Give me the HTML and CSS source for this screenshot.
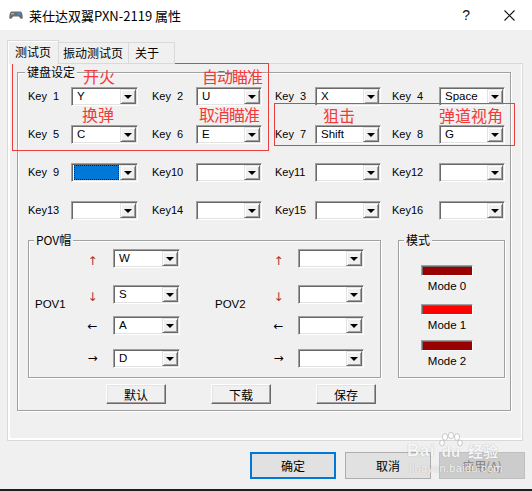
FILE: index.html
```html
<!DOCTYPE html>
<html lang="zh-CN">
<head>
<meta charset="utf-8">
<title>莱仕达双翼PXN-2119 属性</title>
<link rel="stylesheet" href="styles.css">
</head>
<body>
<div class="window">
  <header class="titlebar">
    <svg class="app-icon" width="14" height="10" viewBox="0 0 14 10">
      <path d="M2.5 1.5 H11.5 Q13 1.5 13.5 5 L13.8 8 Q13 9.6 11.2 8.2 L9.8 6.5 H4.2 L2.8 8.2 Q1 9.6 0.2 8 L0.5 5 Q1 1.5 2.5 1.5 Z" fill="#6e6e6e"/>
      <rect x="8.5" y="2.6" width="3" height="2.2" fill="#3a8fe3"/>
      <rect x="2.3" y="3.2" width="2.6" height="1.2" fill="#bdbdbd"/>
    </svg>
    <span class="title">莱仕达双翼PXN-2119 属性</span>
    <span class="help">?</span>
    <svg class="close" width="11" height="11" viewBox="0 0 11 11">
      <path d="M0.5 0.5 L10.5 10.5 M10.5 0.5 L0.5 10.5" stroke="#111" stroke-width="1.1" fill="none"/>
    </svg>
  </header>

  <main class="content">
    <nav class="tabs">
      <div class="tab active">测试页</div>
      <div class="tab t2">振动测试页</div>
      <div class="tab t3">关于</div>
    </nav>

    <section class="panel">
      <div class="group keys">
        <div class="legend">键盘设定</div>
        <div class="keygrid">
          <span class="lbl">Key 1</span><div class="combo w67"><span class="val">Y</span><span class="drop"><i></i></span></div>
          <span class="lbl">Key 2</span><div class="combo"><span class="val">U</span><span class="drop"><i></i></span></div>
          <span class="lbl">Key 3</span><div class="combo"><span class="val">X</span><span class="drop"><i></i></span></div>
          <span class="lbl">Key 4</span><div class="combo"><span class="val">Space</span><span class="drop"><i></i></span></div>

          <span class="lbl">Key 5</span><div class="combo w67"><span class="val">C</span><span class="drop"><i></i></span></div>
          <span class="lbl">Key 6</span><div class="combo"><span class="val">E</span><span class="drop"><i></i></span></div>
          <span class="lbl">Key 7</span><div class="combo"><span class="val">Shift</span><span class="drop"><i></i></span></div>
          <span class="lbl">Key 8</span><div class="combo"><span class="val">G</span><span class="drop"><i></i></span></div>

          <span class="lbl">Key 9</span><div class="combo w67"><span class="val focus"></span><span class="drop"><i></i></span></div>
          <span class="lbl">Key10</span><div class="combo"><span class="val"></span><span class="drop"><i></i></span></div>
          <span class="lbl">Key11</span><div class="combo"><span class="val"></span><span class="drop"><i></i></span></div>
          <span class="lbl">Key12</span><div class="combo"><span class="val"></span><span class="drop"><i></i></span></div>

          <span class="lbl">Key13</span><div class="combo w67"><span class="val"></span><span class="drop"><i></i></span></div>
          <span class="lbl">Key14</span><div class="combo"><span class="val"></span><span class="drop"><i></i></span></div>
          <span class="lbl">Key15</span><div class="combo"><span class="val"></span><span class="drop"><i></i></span></div>
          <span class="lbl">Key16</span><div class="combo"><span class="val"></span><span class="drop"><i></i></span></div>
        </div>

        <div class="lower">
          <div class="group pov">
            <div class="legend">POV帽</div>
            <div class="povgrid">
              <span class="povlbl p1">POV1</span>
              <span class="arrow ud r1 c2">↑</span><div class="combo w67 r1 c3"><span class="val">W</span><span class="drop"><i></i></span></div>
              <span class="arrow ud r2 c2">↓</span><div class="combo w67 r2 c3"><span class="val">S</span><span class="drop"><i></i></span></div>
              <span class="arrow lr r3 c2">←</span><div class="combo w67 r3 c3"><span class="val">A</span><span class="drop"><i></i></span></div>
              <span class="arrow lr r4 c2">→</span><div class="combo w67 r4 c3"><span class="val">D</span><span class="drop"><i></i></span></div>

              <span class="povlbl p2">POV2</span>
              <span class="arrow ud r1 c6">↑</span><div class="combo r1 c7"><span class="val"></span><span class="drop"><i></i></span></div>
              <span class="arrow ud r2 c6">↓</span><div class="combo r2 c7"><span class="val"></span><span class="drop"><i></i></span></div>
              <span class="arrow lr r3 c6">←</span><div class="combo r3 c7"><span class="val"></span><span class="drop"><i></i></span></div>
              <span class="arrow lr r4 c6">→</span><div class="combo r4 c7"><span class="val"></span><span class="drop"><i></i></span></div>
            </div>
          </div>

          <div class="group mode">
            <div class="legend">模式</div>
            <div class="modes">
              <div class="bar dark first"></div>
              <div class="mlabel">Mode 0</div>
              <div class="bar bright"></div>
              <div class="mlabel">Mode 1</div>
              <div class="bar dark last"></div>
              <div class="mlabel">Mode 2</div>
            </div>
          </div>
        </div>

        <div class="actions">
          <button class="abtn">默认</button>
          <button class="abtn">下载</button>
          <button class="abtn">保存</button>
        </div>
      </div>
    </section>

    <footer class="footer">
      <button class="fbtn default">确定</button>
      <button class="fbtn cancel">取消</button>
      <button class="fbtn disabled">应用(A)</button>
    </footer>
  </main>

  <div class="note-box nb1"></div>
  <div class="note-box nb2"></div>
  <span class="note n1">开火</span>
  <span class="note n2">自动瞄准</span>
  <span class="note n3">换弹</span>
  <span class="note n4">取消瞄准</span>
  <span class="note n5">狙击</span>
  <span class="note n6">弹道视角</span>

  <div class="watermark">
    <div class="wm-top">
      <span class="wm-bai">Bai</span>
      <span class="wm-paw">
        <svg width="26" height="16" viewBox="0 0 26 16">
          <g fill="rgba(255,255,255,0.9)" stroke="rgba(120,120,120,0.45)" stroke-width="0.8">
            <ellipse cx="7" cy="5" rx="2.6" ry="3.4"/>
            <ellipse cx="13" cy="3.6" rx="2.6" ry="3.2"/>
            <ellipse cx="19" cy="5" rx="2.6" ry="3.4"/>
            <ellipse cx="4" cy="11" rx="2.3" ry="3"/>
            <ellipse cx="22" cy="11" rx="2.3" ry="3"/>
          </g>
        </svg>
        <span class="wm-du">du</span>
      </span>
      <span class="wm-cn">经验</span>
    </div>
    <div class="wm-url">jingyan.baidu.com</div>
  </div>
</div>
</body>
</html>
```
FILE: styles.css
```css
html, body {
  margin: 0;
  padding: 0;
}

body {
  width: 532px;
  height: 491px;
  overflow: hidden;
  background: #f0f0f0;
  font-family: "Liberation Sans", "Noto Sans CJK SC", sans-serif;
  color: #000;
}

.window {
  position: relative;
  width: 532px;
  height: 491px;
  box-sizing: border-box;
  background: #f0f0f0;
  border-bottom: 2px solid #1e1e1e;
  overflow: hidden;
}

/* ---------- title bar ---------- */
.titlebar {
  height: 30px;
  background: #fff;
  display: flex;
  align-items: center;
}

.app-icon {
  margin-left: 9px;
  flex: none;
}

.title {
  margin-left: 6px;
  font: 13px/16px "Noto Sans CJK SC", sans-serif;
  color: #000;
  padding-top: 1px;
}

.help {
  margin-left: auto;
  margin-right: 34px;
  font: 14px/16px "Liberation Sans", sans-serif;
  color: #111;
}

.close {
  margin-right: 17px;
  flex: none;
}

/* ---------- tabs ---------- */
.tabs {
  position: relative;
  z-index: 1;
  display: flex;
  align-items: flex-end;
  height: 24px;
  margin: 10px 0 0 7px;
}

.tab {
  box-sizing: border-box;
  height: 22px;
  border: 1px solid #d9d9d9;
  border-left: none;
  background: #f0f0f0;
  font: 12px/19px "Noto Sans CJK SC", sans-serif;
  white-space: nowrap;
}

.tab.active {
  width: 52px;
  height: 24px;
  border-left: 1px solid #d9d9d9;
  border-bottom: none;
  padding-left: 7px;
  line-height: 22px;
  box-shadow: inset 1px 1px 0 #fff;
}

.tab.t2 {
  width: 70px;
  padding-left: 4px;
}

.tab.t3 {
  width: 46px;
  padding-left: 6px;
}

/* ---------- panel ---------- */
.panel {
  box-sizing: border-box;
  width: 516px;
  height: 378px;
  margin: -1px 0 0 7px;
  border: 1px solid #d9d9d9;
  background: #f0f0f0;
  box-shadow: inset 2px 0 0 #fff, inset 0 -2px 0 #fff, inset -1px 0 0 #fff;
  overflow: hidden;
}

.group {
  box-sizing: border-box;
  border: 1px solid #a0a0a0;
  box-shadow: 1px 1px 0 #fff, inset 1px 1px 0 #fff;
}

.legend {
  width: fit-content;
  margin: -8px 0 0 7px;
  padding: 0 2px;
  background: #f0f0f0;
  font: 12px/14px "Noto Sans CJK SC", sans-serif;
  white-space: nowrap;
}

.keys {
  width: 494px;
  height: 339px;
  margin: 8px 0 0 9px;
}

.keygrid {
  display: grid;
  grid-template-columns: 43px 81px 44px 79px 40px 77px 47px 66px;
  grid-auto-rows: 19px;
  row-gap: 19px;
  margin: 8px 0 0 10px;
}

.lbl {
  align-self: center;
  font: 11px/13px "Liberation Sans", sans-serif;
  word-spacing: 3px;
  white-space: nowrap;
}

/* ---------- combo box ---------- */
.combo {
  box-sizing: border-box;
  width: 66px;
  height: 19px;
  display: flex;
  padding: 1px;
  background: #fff;
  border: 1px solid;
  border-color: #a0a0a0 #fff #fff #a0a0a0;
  box-shadow: inset 1px 1px 0 #696969, inset -1px -1px 0 #e3e3e3;
}

.combo.w67 {
  width: 67px;
}

.val {
  flex: 1;
  padding-left: 4px;
  font: 11.5px/15px "Liberation Sans", sans-serif;
  white-space: nowrap;
  overflow: hidden;
}

.val.focus {
  padding-left: 0;
  margin: 0 1px 0 1px;
  background: #0078d7;
  outline: 1px dotted #2b1a00;
  outline-offset: -1px;
}

.drop {
  flex: none;
  box-sizing: border-box;
  width: 16px;
  height: 15px;
  display: flex;
  align-items: center;
  justify-content: center;
  background: #f0f0f0;
  border: 1px solid;
  border-color: #e3e3e3 #696969 #696969 #e3e3e3;
  box-shadow: inset 1px 1px 0 #fff, inset -1px -1px 0 #a0a0a0;
}

.drop i {
  display: block;
  width: 0;
  height: 0;
  margin-top: 1px;
  border-top: 4px solid #000;
  border-left: 4px solid transparent;
  border-right: 4px solid transparent;
}

/* ---------- lower groups ---------- */
.lower {
  display: flex;
  gap: 17px;
  margin: 20px 0 0 10px;
}

.pov {
  width: 353px;
  height: 138px;
}

.pov .legend,
.mode .legend {
  margin-left: 5px;
}

.povgrid {
  display: grid;
  grid-template-columns: 52px 26px 67px 35px 58px 25px 66px;
  grid-template-rows: 36px 31px 33px 19px;
  margin: 2px 0 0 6px;
}

.povgrid .combo {
  align-self: start;
}

.povlbl {
  grid-row: 1 / 5;
  align-self: center;
  margin-bottom: 9px;
  font: 11.5px/13px "Liberation Sans", sans-serif;
}

.povlbl.p1 { grid-column: 1; }
.povlbl.p2 { grid-column: 5; }

.r1 { grid-row: 1; }
.r2 { grid-row: 2; }
.r3 { grid-row: 3; }
.r4 { grid-row: 4; }
.c2 { grid-column: 2; }
.c3 { grid-column: 3; }
.c6 { grid-column: 6; }
.c7 { grid-column: 7; }

.arrow {
  align-self: start;
  width: 11px;
  height: 19px;
  text-align: center;
  font-family: "DejaVu Sans", "Liberation Sans", sans-serif;
}

.arrow.ud {
  font-size: 12px;
  line-height: 19px;
  padding-top: 3px;
  color: #a03a3a;
}

.arrow.lr {
  font-size: 12px;
  line-height: 19px;
  color: #000;
}

.arrow.r3 { padding-top: 1px; }

.mode {
  width: 107px;
  height: 138px;
}

.modes {
  display: flex;
  flex-direction: column;
  align-items: center;
  padding-right: 9px;
}

.bar {
  box-sizing: border-box;
  width: 52px;
  height: 11px;
  margin-top: 11px;
  border: 1px solid;
  border-color: #a0a0a0 #fff #fff #a0a0a0;
  box-shadow: inset 1px 1px 0 #696969;
}

.bar.first { margin-top: 18px; }
.bar.last { margin-top: 8px; }

.bar.dark { background: #990000; }
.bar.bright { background: #ff0000; }

.mlabel {
  margin-top: 4px;
  font: 11.5px/13px "Liberation Sans", sans-serif;
  white-space: nowrap;
}

/* ---------- action buttons ---------- */
.actions {
  display: flex;
  gap: 45px;
  margin: 6px 0 0 88px;
}

.abtn {
  box-sizing: border-box;
  width: 60px;
  height: 20px;
  padding: 0;
  margin: 0;
  background: #f0f0f0;
  border: 1px solid;
  border-color: #fff #696969 #696969 #fff;
  box-shadow: inset -1px -1px 0 #a0a0a0, inset 1px 1px 0 #e3e3e3;
  font: 12px/17px "Noto Sans CJK SC", sans-serif;
  color: #000;
  text-align: center;
}

/* ---------- footer ---------- */
.footer {
  display: flex;
  margin-top: 11px;
  padding-left: 250px;
}

.fbtn {
  box-sizing: border-box;
  width: 86px;
  height: 27px;
  padding: 0;
  margin: 0;
  background: #e1e1e1;
  border: 1px solid #adadad;
  font: 12px/14px "Noto Sans CJK SC", sans-serif;
  color: #000;
  text-align: center;
}

.fbtn.default {
  border: 2px solid #0078d7;
}

.fbtn.cancel {
  margin-left: 9px;
}

.fbtn.disabled {
  margin-left: 8px;
  background: #cccccc;
  border-color: #bfbfbf;
  color: #838383;
}

/* ---------- red annotations (overlay) ---------- */
.note-box {
  position: absolute;
  box-sizing: border-box;
  border: 1px solid #e8403f;
}

.nb1 { left: 12px; top: 63px; width: 257px; height: 88px; }
.nb2 { left: 274px; top: 103px; width: 241px; height: 43px; }

.note {
  position: absolute;
  font: 16px/16px "Noto Sans CJK SC", sans-serif;
  color: #f23a3a;
  white-space: nowrap;
}

.n1 { left: 83px; top: 68px; }
.n2 { left: 202px; top: 68px; letter-spacing: -1px; }
.n3 { left: 82px; top: 106px; }
.n4 { left: 199px; top: 106px; letter-spacing: -1px; }
.n5 { left: 323px; top: 107px; }
.n6 { left: 439px; top: 107px; }

/* ---------- watermark (overlay) ---------- */
.watermark {
  position: absolute;
  left: 407px;
  top: 432px;
  color: rgba(255, 255, 255, 0.92);
  text-shadow: 0 0 1px rgba(90, 90, 90, 0.5);
  pointer-events: none;
}

.wm-top {
  display: flex;
  align-items: flex-end;
}

.wm-bai {
  font: bold 17px/17px "Liberation Sans", sans-serif;
  letter-spacing: 0.5px;
}

.wm-paw {
  display: flex;
  flex-direction: column;
  align-items: center;
  margin-left: 2px;
  width: 28px;
}

.wm-du {
  margin-top: -3px;
  font: bold 15px/14px "Liberation Sans", sans-serif;
}

.wm-cn {
  margin-left: 3px;
  font: bold 15px/16px "Noto Sans CJK SC", sans-serif;
}

.wm-url {
  margin-top: 4px;
  margin-left: 2px;
  font: 11px/10px "Liberation Sans", sans-serif;
  letter-spacing: 0.3px;
}
```
